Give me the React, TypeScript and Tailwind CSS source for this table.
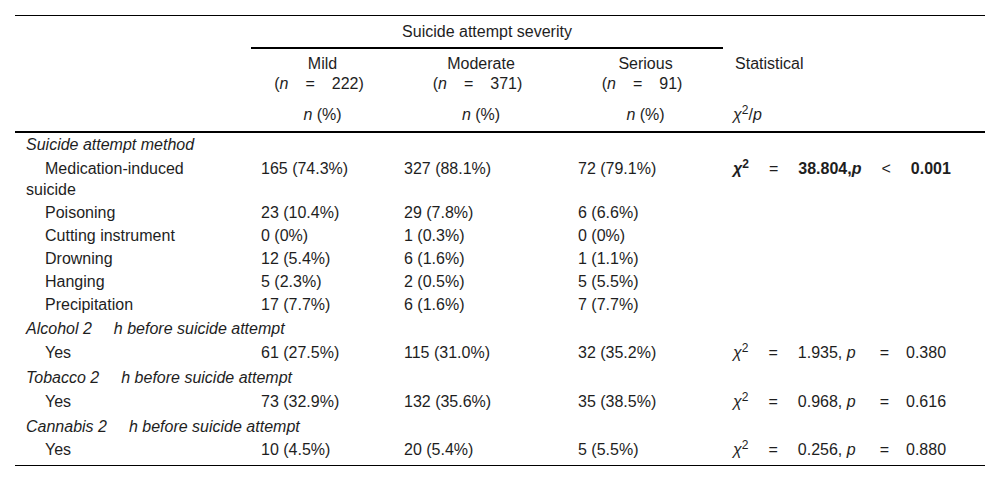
import React from "react";

const Eq = ({ s, w = "px-[20px]" }: { s: string; w?: string }) => (
  <span className={`inline-block ${w} font-normal`}>{s}</span>
);

const Chi = ({ bold = false }: { bold?: boolean }) => (
  <span className={bold ? "font-bold" : ""}>
    <i>χ</i>
    <sup>2</sup>
  </span>
);

type DataRow = {
  label: string;
  v: [string, string, string];
  stat?: React.ReactNode;
  pad?: string;
};

const methodRows: DataRow[] = [
  {
    label: "Medication-induced suicide",
    v: ["165 (74.3%)", "327 (88.1%)", "72 (79.1%)"],
    pad: "pt-[1.5px] pb-[1px]",
    stat: (
      <>
        <Chi bold />
        <Eq s="=" />
        <b>
          38.804,<i>p</i>
        </b>
        <Eq s="<" />
        <b>0.001</b>
      </>
    ),
  },
  { label: "Poisoning", v: ["23 (10.4%)", "29 (7.8%)", "6 (6.6%)"] },
  { label: "Cutting instrument", v: ["0 (0%)", "1 (0.3%)", "0 (0%)"] },
  { label: "Drowning", v: ["12 (5.4%)", "6 (1.6%)", "1 (1.1%)"] },
  { label: "Hanging", v: ["5 (2.3%)", "2 (0.5%)", "5 (5.5%)"] },
  { label: "Precipitation", v: ["17 (7.7%)", "6 (1.6%)", "7 (7.7%)"] },
];

const statP = (chi: string, p: string) => (
  <>
    <Chi />
    <Eq s="=" />
    {chi}, <i>p</i>
    <Eq s="=" w="pl-[24px] pr-[17px]" />
    {p}
  </>
);

const substance: { name: string; v: [string, string, string]; stat: React.ReactNode; pad: string }[] = [
  { name: "Alcohol 2", v: ["61 (27.5%)", "115 (31.0%)", "32 (35.2%)"], stat: statP("1.935", "0.380"), pad: "pt-[2px] pb-[2px]" },
  { name: "Tobacco 2", v: ["73 (32.9%)", "132 (35.6%)", "35 (38.5%)"], stat: statP("0.968", "0.616"), pad: "pt-[2px] pb-[2px]" },
  { name: "Cannabis 2", v: ["10 (4.5%)", "20 (5.4%)", "5 (5.5%)"], stat: statP("0.256", "0.880"), pad: "pt-[1px] pb-[5px]" },
];

const Row = ({ r }: { r: DataRow }) => {
  const pad = r.pad ?? "py-[1px]";
  return (
    <tr>
      <td className={`pl-[11px] pr-[20px] ${pad} indent-[19px] align-top`}>{r.label}</td>
      {r.v.map((x, i) => (
        <td key={i} className={`pl-[10px] ${pad} align-top`}>
          {x}
        </td>
      ))}
      <td className={`pl-[10px] ${pad} align-top whitespace-nowrap`}>{r.stat}</td>
    </tr>
  );
};

const NHead = ({ name, n }: { name: string; n: string }) => (
  <td className="pt-[5px] pb-[5px] text-center align-top">
    {name}
    <br />(<i>n</i>
    <Eq s="=" w="px-[17px]" />
    {n})<span className="inline-block w-[7px]" />
  </td>
);

export default function App() {
  return (
    <div
      className="w-[1000px] h-[481px] bg-white pl-[15px] pt-[15px] text-[#1e1e1e] text-[16px]"
      style={{ fontFamily: '"Liberation Sans", Arial, sans-serif' }}
    >
      <table className="w-[970px] table-fixed border-separate border-spacing-0 border-t border-b border-black">
        <colgroup>
          <col className="w-[236px]" />
          <col className="w-[143px]" />
          <col className="w-[174px]" />
          <col className="w-[155px]" />
          <col className="w-[262px]" />
        </colgroup>
        <thead className="leading-[20px]">
          <tr>
            <td rowSpan={3} className="border-b-2 border-black" />
            <td colSpan={3} className="pt-[6px] pb-[5px] text-center border-b-2 border-black">
              Suicide attempt severity
            </td>
            <td />
          </tr>
          <tr>
            <NHead name="Mild" n="222" />
            <NHead name="Moderate" n="371" />
            <NHead name="Serious" n="91" />
            <td className="pt-[5px] pb-[5px] pl-[12px] align-top">Statistical</td>
          </tr>
          <tr>
            {[0, 1, 2].map((i) => (
              <td key={i} className="pt-[6px] pb-[6px] text-center border-b-2 border-black">
                <i>n</i> (%)
              </td>
            ))}
            <td className="pt-[6px] pb-[6px] pl-[10px] border-b-2 border-black">
              <i>χ</i>
              <sup>2</sup>/<i>p</i>
            </td>
          </tr>
        </thead>
        <tbody className="leading-[21px]">
          <tr>
            <td colSpan={5} className="pl-[11px] py-[1px] italic">
              Suicide attempt method
            </td>
          </tr>
          {methodRows.map((r) => (
            <Row key={r.label} r={r} />
          ))}
          {substance.map((s) => (
            <React.Fragment key={s.name}>
              <tr>
                <td colSpan={5} className="pl-[11px] pt-[2px] pb-[1px] italic whitespace-nowrap">
                  {s.name}
                  <span className="ml-[22px]">h before suicide attempt</span>
                </td>
              </tr>
              <Row r={{ label: "Yes", v: s.v, stat: s.stat, pad: s.pad }} />
            </React.Fragment>
          ))}
        </tbody>
      </table>
    </div>
  );
}
